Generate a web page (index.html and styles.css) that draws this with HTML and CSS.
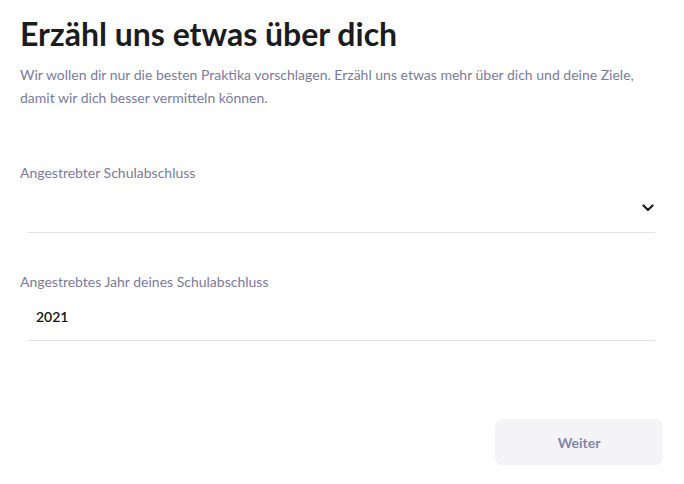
FILE: index.html
```html
<!DOCTYPE html>
<html lang="de">
<head>
    <meta charset="UTF-8">
    <meta name="viewport" content="width=device-width, initial-scale=1.0">
    <title>Erzähl uns etwas über dich</title>
    <link rel="stylesheet" href="styles.css">
</head>
<body>
    <div class="container">
        <h1>Erzähl uns etwas über dich</h1>
        <p class="intro">Wir wollen dir nur die besten Praktika vorschlagen. Erzähl uns etwas mehr über dich und deine Ziele, damit wir dich besser vermitteln können.</p>

        <div class="field">
            <label class="field-label">Angestrebter Schulabschluss</label>
            <div class="field-input">
                <span class="value"></span>
                <svg class="chevron" width="12" height="8" viewBox="0 0 12 8">
                    <path d="M1.5 1.5 L6 6 L10.5 1.5" fill="none" stroke="#1d1d24" stroke-width="2.2" stroke-linecap="round" stroke-linejoin="round"/>
                </svg>
            </div>
        </div>

        <div class="field">
            <label class="field-label">Angestrebtes Jahr deines Schulabschluss</label>
            <div class="field-input">
                <span class="value">2021</span>
            </div>
        </div>

        <div class="actions">
            <button class="btn-next">Weiter</button>
        </div>
    </div>
</body>
</html>
```

FILE: styles.css
```css
body {
    font-family: Lato, "Noto Sans", sans-serif;
    margin: 0;
    background-color: #fff;
    color: #1b1b20;
}

.container {
    padding: 14px 21px 0 20px;
}

h1 {
    font-size: 32px;
    font-weight: 700;
    line-height: 40px;
    margin: 0;
}

.intro {
    font-size: 14px;
    line-height: 23px;
    color: #7b7b9c;
    margin: 9px 0 0;
}

.field {
    margin-top: 54px;
}

.field + .field {
    margin-top: 39px;
}

.field-label {
    display: block;
    font-size: 14px;
    line-height: 20px;
    color: #7b7b9c;
}

.field-input {
    display: flex;
    align-items: center;
    justify-content: space-between;
    margin: 0 8px;
    height: 49px;
    padding: 0 0 0 8px;
    border-bottom: 1px solid #e2e2e8;
}

.field + .field .field-input {
    height: 48px;
}

.value {
    font-size: 14px;
    font-weight: 600;
    color: #111;
}

.chevron {
    margin-right: 1px;
}

.actions {
    display: flex;
    justify-content: flex-end;
    margin-top: 78px;
}

.btn-next {
    font-family: Lato, "Noto Sans", sans-serif;
    font-size: 14px;
    font-weight: 700;
    color: #8585a9;
    background-color: #f4f4f6;
    border: none;
    border-radius: 7px;
    width: 168px;
    height: 46px;
}
```
